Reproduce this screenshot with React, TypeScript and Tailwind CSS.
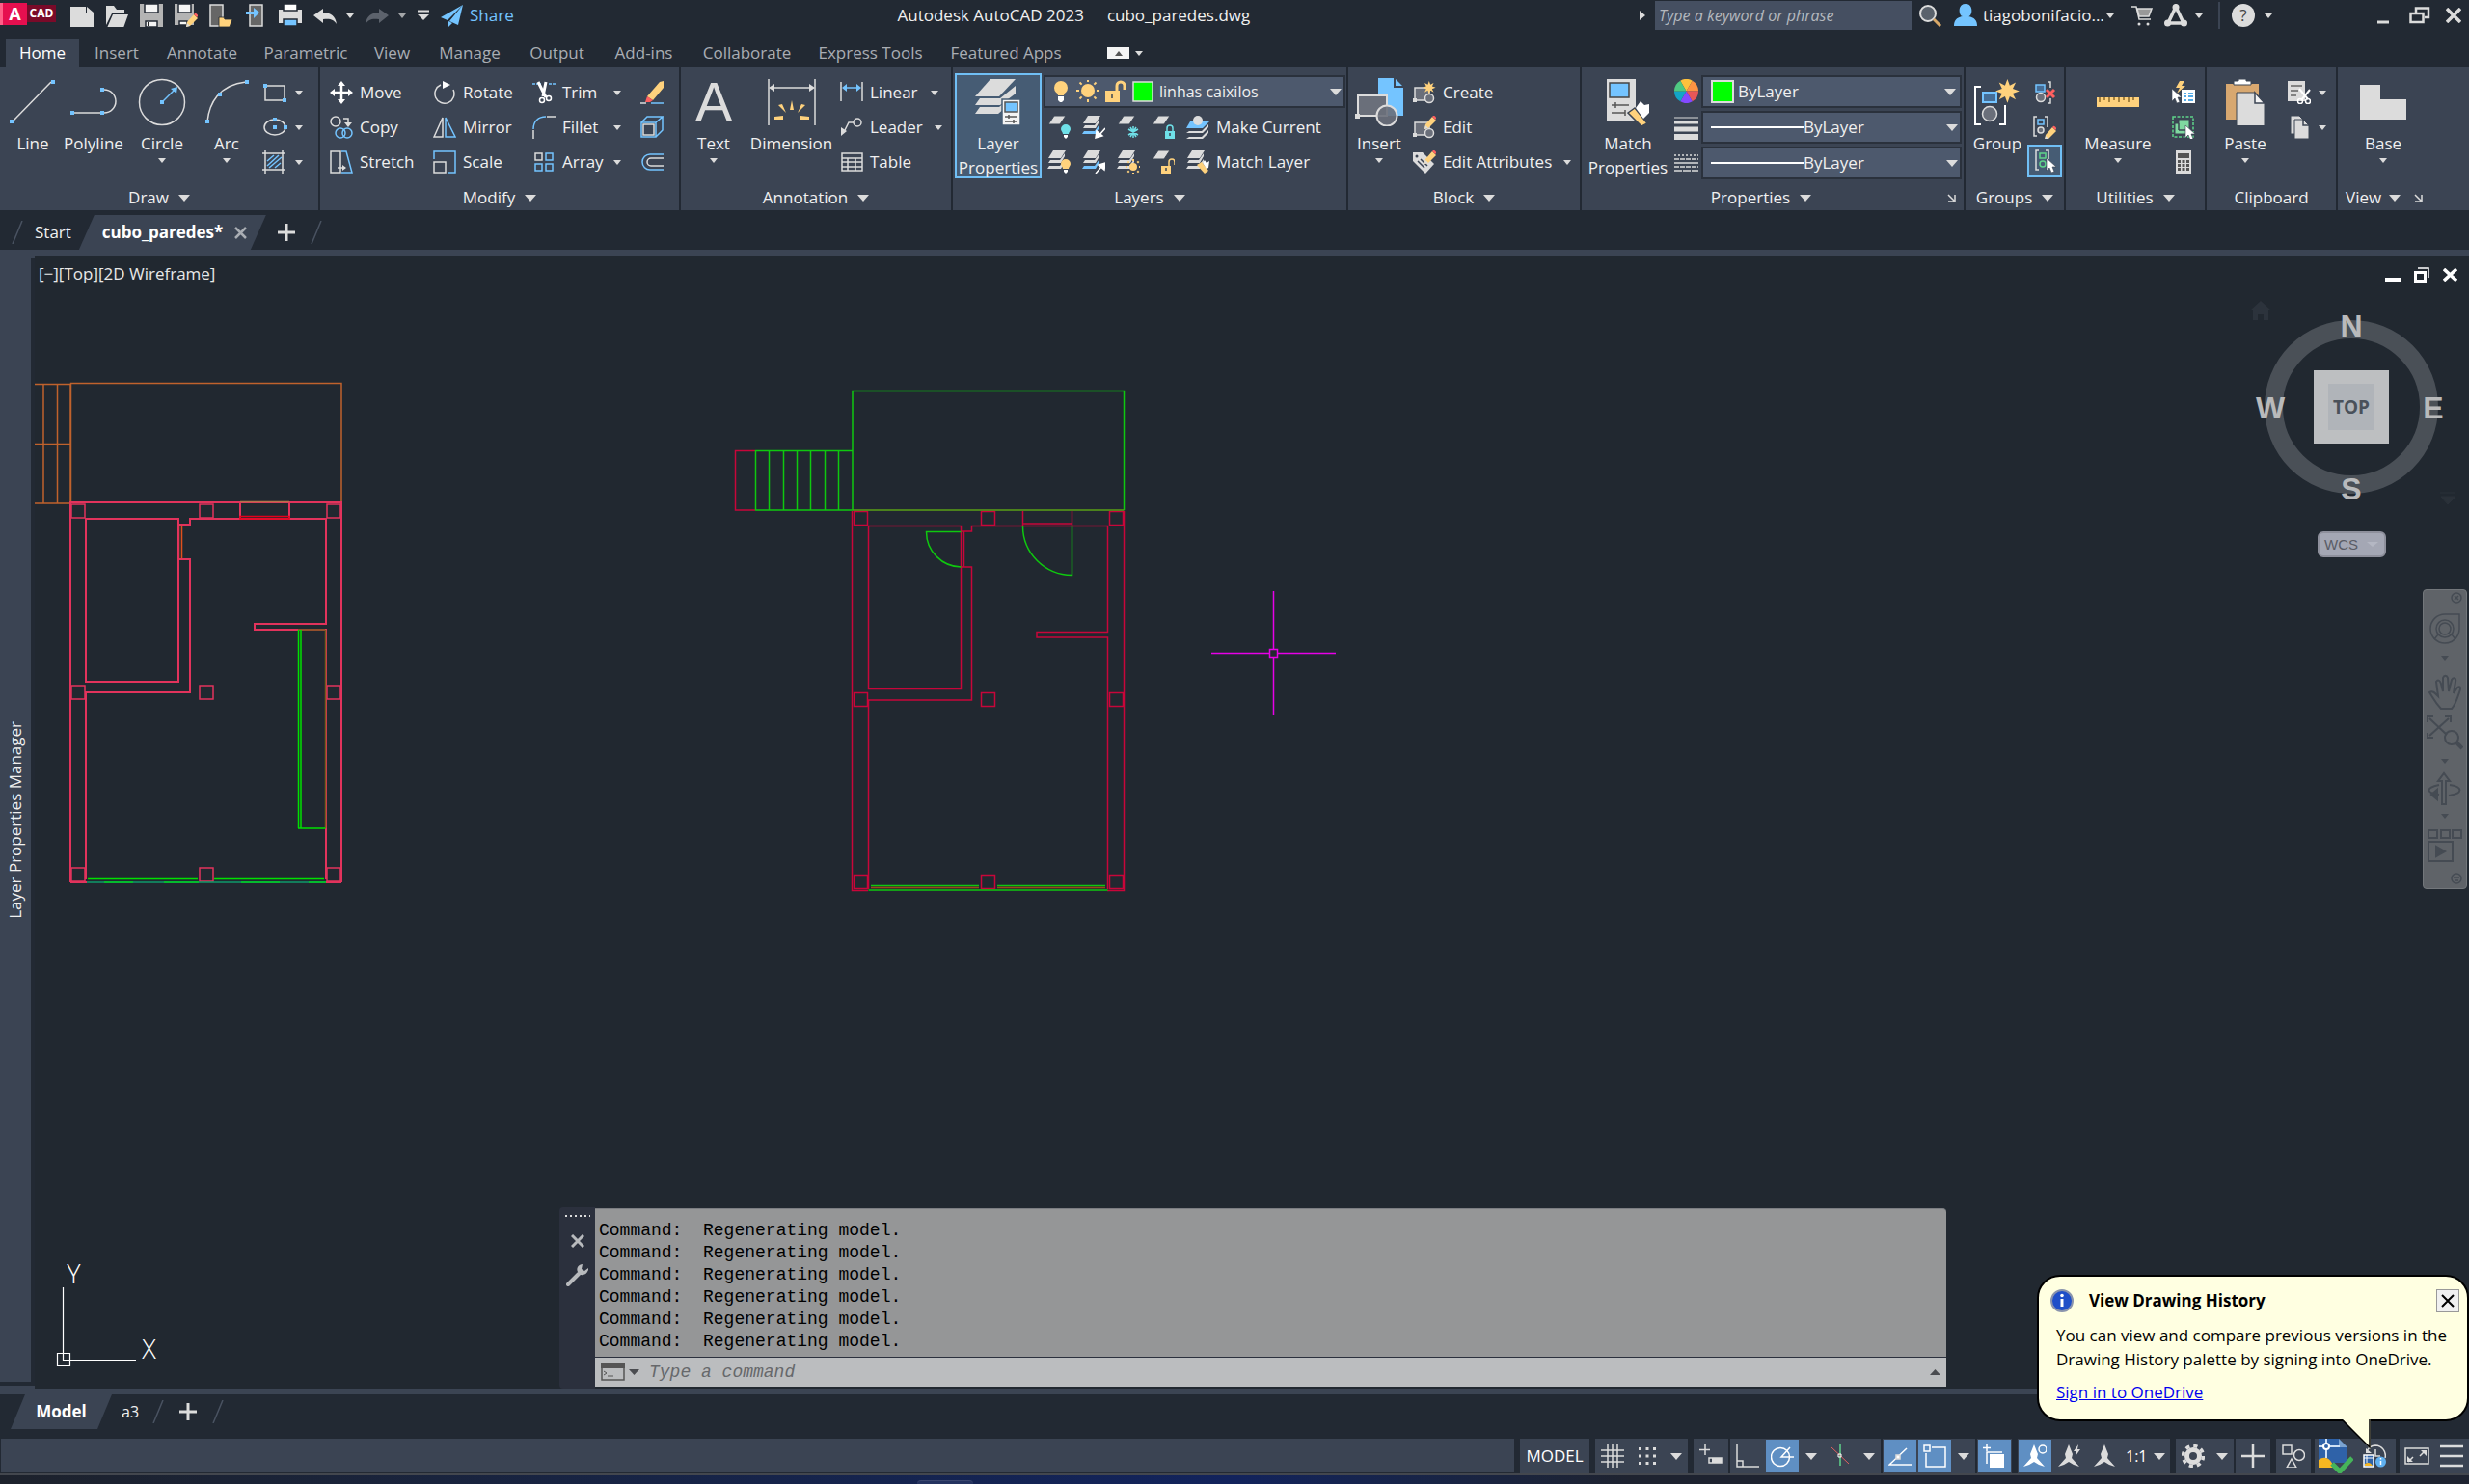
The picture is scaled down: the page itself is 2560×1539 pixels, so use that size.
import React from "react";

const L = "#dcdcdc";
const B = "#74c4ff";
const Y = "#ffd27d";
const G = "#5fd38a";
const D = "#3b4453";

type Kids = { children?: React.ReactNode };

function Svg({ w = 24, h = 24, children }: Kids & { w?: number; h?: number }) {
  return (
    <svg width={w} height={h} viewBox={`0 0 ${w} ${h}`} fill="none" stroke={L} strokeWidth={1.5} className="block shrink-0" aria-hidden="true">
      {children}
    </svg>
  );
}

function Tri({ big = false }: { big?: boolean }) {
  return big ? (
    <svg width="12" height="7" viewBox="0 0 12 7" fill={L} className="block shrink-0" aria-hidden="true"><path d="M0 0h12L6 7z" /></svg>
  ) : (
    <svg width="8" height="5" viewBox="0 0 8 5" fill={L} className="block shrink-0" aria-hidden="true"><path d="M0 0h8L4 5z" /></svg>
  );
}

function Tall({ icon, label, label2, arrow, className = "" }: { icon: React.ReactNode; label: string; label2?: string; arrow?: boolean; className?: string }) {
  return (
    <button type="button" className={`flex h-27 shrink-0 flex-col items-center pt-1 ${className}`}>
      <span className="flex h-12 items-center justify-center">{icon}</span>
      <span className="mt-1.5 whitespace-nowrap leading-[26px]">{label}</span>
      {label2 && <span className="whitespace-nowrap leading-6">{label2}</span>}
      {arrow && <span className="mt-0.5"><Tri /></span>}
    </button>
  );
}

function Small({ icon, label, arrow, className = "" }: { icon: React.ReactNode; label: string; arrow?: boolean; className?: string }) {
  return (
    <button type="button" className={`flex h-9 items-center gap-[7px] ${className}`}>
      {icon}
      <span className="whitespace-nowrap">{label}</span>
      {arrow && <span className="ml-auto"><Tri /></span>}
    </button>
  );
}

function IconBtn({ icon, label, arrow, className = "" }: { icon: React.ReactNode; label: string; arrow?: boolean; className?: string }) {
  return (
    <button type="button" aria-label={label} className={`flex h-9 items-center ${className}`}>
      {icon}
      {arrow && <span className="ml-2"><Tri /></span>}
    </button>
  );
}

function Panel({ title, width, arrow = true, corner, children }: Kids & { title: string; width: string; arrow?: boolean; corner?: boolean }) {
  return (
    <section aria-label={title} className={`flex shrink-0 flex-col border-r-2 border-[#222933] pt-2 ${width}`}>
      <div className="flex h-27">{children}</div>
      <div className="flex h-8 items-center justify-center pt-1.5">
        <span className="flex-1" />
        <button type="button" className="flex items-center gap-2.5">
          {title}
          {arrow && <Tri big />}
        </button>
        {corner ? (
          <span className="ml-4 flex flex-1 justify-end pr-2"><button type="button" aria-label={`${title} settings`}><Svg w={9} h={9}><path d="M1 1l6 6M8 1v7H1" /></Svg></button></span>
        ) : <span className="flex-1" />}
      </div>
    </section>
  );
}

/* ---- small icon fragments ---- */
const sq = (x: number, y: number) => <rect x={x} y={y} width="4" height="4" fill={B} stroke="none" />;
const Sheet = ({ x = 0, y = 0, c = L }: { x?: number; y?: number; c?: string }) => <path d={`M${x + 6} ${y}h12l-6 9h-12z`} fill={c} stroke={D} strokeWidth="1" />;
const Stack = ({ low = L, kids }: { low?: string; kids?: React.ReactNode }) => (
  <Svg>
    <path d="M6 0h13l-5 8H1z" fill={L} stroke="none" />
    <path d="M3 10h10l5-7v3l-4 7H1z" fill={L} stroke="none" />
    <path d="M2 16h11l5-7v3l-4 7H0z" fill={low} stroke="none" />
    {kids}
  </Svg>
);
const Bulb = ({ x = 0, y = 0, c = Y }: { x?: number; y?: number; c?: string }) => (
  <g stroke="none" transform={`translate(${x} ${y})`}>
    <path d="M5 0a5 5 0 0 1 5 5c0 2-2 3-2 5H2C2 8 0 7 0 5a5 5 0 0 1 5-5z" fill={c} />
    <path d="M3 11h4v2l-2 2-2-2z" fill="#fff" />
  </g>
);
const Arrow = ({ x = 0, y = 0 }: { x?: number; y?: number }) => <path transform={`translate(${x} ${y})`} d="M0 0v13l3-3 2 5 3-1-2-5h4z" fill="#fff" stroke={D} strokeWidth=".6" />;
const Pencil = ({ x = 0, y = 0 }: { x?: number; y?: number }) => (
  <g transform={`translate(${x} ${y})`} stroke="none">
    <path d="M8 1l4 4-8 8-4 1 1-5z" fill={Y} /><path d="M8 1l1-1c1-1 4 2 3 3l-1 1z" fill="#ff6060" /><path d="M0 14l1-4 3 3z" fill={L} />
  </g>
);
const Sun = ({ x = 0, y = 0, r = 4, R = 11 }: { x?: number; y?: number; r?: number; R?: number }) => (
  <g transform={`translate(${x} ${y})`} stroke={Y} strokeWidth="2">
    <circle r={r} fill={Y} stroke="none" />
    {[0, 45, 90, 135, 180, 225, 270, 315].map((a) => <path key={a} d={`M0 ${-r - 2}V${-R}`} transform={`rotate(${a})`} />)}
  </g>
);
const Lock = ({ x = 0, y = 0, c = Y, open = true }: { x?: number; y?: number; c?: string; open?: boolean }) => (
  <g transform={`translate(${x} ${y})`}>
    <rect x="0" y="7" width="10" height="8" fill={c} stroke="none" />
    <path d={open ? "M8 7V3a3 3 0 0 1 6 0v3" : "M2 7V4a3 3 0 0 1 6 0v3"} stroke={c} /><path d="M5 9v3" stroke={D} />
  </g>
);
const star = "M8 0l1.6 4.4L13.600 2.300 11.600 6.400 16 8l-4.400 1.600 2 4.100-4-2.100L8 16l-1.600-4.400-4 2.100 2-4.100L0 8l4.400-1.600-2-4.100 4 2.100z";

function BlockBase() {
  return <><path d="M2 7h15v13H2z" fill="#6a6f7a" stroke={L} /><circle cx="17" cy="18" r="4.500" fill="#6a6f7a" /><rect x="0" y="18" width="4" height="4" fill={L} stroke="none" /></>;
}

/* ---- title bar ---- */
function TitleBar() {
  return (
    <header className="flex h-10 items-start bg-[#222933] text-[17px] text-[#f0f0f0]">
      <div className="flex h-8 w-[73px] shrink-0 items-center">
        <button type="button" aria-label="Application menu" className="flex items-center text-white">
          <span className="mb-1 flex h-[23px] w-7 items-center justify-center border-l-3 border-[#ff5f88] bg-[#e60f4f] text-[18px] font-bold leading-none">A</span>
          <span className="mb-1 flex h-[18px] w-[30px] items-center justify-center bg-[#7a0a29] text-[12px] font-bold leading-none">CAD</span>
        </button>
      </div>
      <nav aria-label="Quick access" className="flex h-8 items-center">
        <div className="flex gap-3">
          <button type="button" aria-label="New"><Svg><path d="M0 3h16v7h8v15H0z M17 3l7 6h-7z" fill={L} stroke="none" /></Svg></button>
          <button type="button" aria-label="Open"><Svg><path d="M1 2h8l3 4h8v4H7L1 22z M8 11h16l-5 14H2z" fill={L} stroke="none" /></Svg></button>
          <button type="button" aria-label="Save"><Svg><path d="M0 0h24v24H0z" fill="#b4b4b4" stroke="none" /><path d="M5 0h14v9H5z M6 18h12v6H6z" fill="#f4f4f4" stroke="#222933" strokeWidth="1.500" /><path d="M9 19v4" stroke="#222" strokeWidth="2" /></Svg></button>
          <button type="button" aria-label="Save as"><Svg><path d="M0 0h20v22H0z" fill="#b4b4b4" stroke="none" /><path d="M4 0h13v9H4z M5 18h8v4H5z" fill="#f4f4f4" stroke="#222933" /><Pencil x={12} y={10} /></Svg></button>
          <button type="button" aria-label="Open from mobile"><Svg><path d="M1 1h13v22H1z" fill="#666" stroke={L} /><path d="M10 14h5l1 2h8l-3 8H10z" fill={Y} stroke="#222933" strokeWidth=".8" /></Svg></button>
          <button type="button" aria-label="Save to mobile"><Svg><path d="M6 1h13v22H6z" fill="#666" stroke={L} /><path d="M2 8h8V4l6 5-6 6v-4H2z" fill={B} stroke="none" /></Svg></button>
          <button type="button" aria-label="Plot"><Svg><path d="M0 6h24v14H0z" fill={L} stroke="none" /><path d="M5 0h14v7H5z" fill="#fff" stroke="#222933" /><path d="M5 16h14v7H5z" fill={B} stroke="#222933" /></Svg></button>
          <button type="button" aria-label="Undo"><Svg><path d="M0 12l10-7v4c8 0 13 4 14 12-3-5-7-6-14-5v4z" fill={L} stroke="none" /></Svg></button>
        </div>
        <button type="button" aria-label="Undo list" className="ml-2.5"><Tri /></button>
        <button type="button" aria-label="Redo" className="ml-3"><Svg><path d="M24 12L14 5v4C6 9 1 13 0 21c3-5 7-6 14-5v4z" fill="#5c626c" stroke="none" /></Svg></button>
        <button type="button" aria-label="Redo list" className="ml-2.5 opacity-70"><Tri /></button>
        <button type="button" aria-label="Customize" className="ml-3"><Svg w={12} h={12}><path d="M0 1.500h12" strokeWidth="2" /><path d="M0 5h12l-6 6z" fill={L} stroke="none" /></Svg></button>
        <button type="button" className="ml-3 flex items-center gap-1.5 text-[#74c4ff]">
          <Svg><path d="M23 1L0 14l7 3z M23 1L9 18l9 4z M8 18v6l4-4z" fill={B} stroke="none" /></Svg>Share
        </button>
      </nav>
      <h1 className="flex h-8 flex-1 items-center justify-center gap-6 pr-1.5 font-normal">
        <span>Autodesk AutoCAD 2023</span><span>cubo_paredes.dwg</span>
      </h1>
      <div className="flex h-8 items-center">
        <button type="button" aria-label="Collapse search"><Svg w={6} h={10}><path d="M0 0l6 5-6 5z" fill={L} stroke="none" /></Svg></button>
        <input type="text" aria-label="Search" placeholder="Type a keyword or phrase" className="ml-2.5 h-[30px] w-[266px] bg-[#454f61] px-1 text-[16px] italic placeholder:text-[#b4b8be]" />
        <button type="button" aria-label="Run search" className="ml-2"><Svg><circle cx="9" cy="10" r="8" fill="#5a626c" strokeWidth="2" /><path d="M15 16l7 7" stroke="#d8a868" strokeWidth="3" /></Svg></button>
        <button type="button" className="ml-3 flex w-[166px] items-center">
          <Svg><path d="M12 0c9 0 7 13 3 13 6 1 9 4 9 10H0c0-6 3-9 9-10C5 13 3 0 12 0z" fill={B} stroke="none" /></Svg>
          <span className="ml-1.5 whitespace-nowrap text-[17px]">tiagobonifacio...</span><span className="ml-auto"><Tri /></span>
        </button>
        <button type="button" aria-label="Store" className="ml-4.5"><Svg><path d="M0 3h5l3 13h12" /><path d="M6 5h15l-3 8H8z" fill="#999" /><circle cx="8" cy="21" r="1.500" fill={L} stroke="none" /><circle cx="17" cy="21" r="1.500" fill={L} stroke="none" /></Svg></button>
        <button type="button" aria-label="Autodesk apps" className="ml-2.5 flex items-center gap-2"><Svg><path d="M12 3L4 20h16z" strokeWidth="3.500" /><circle cx="12" cy="3.500" r="3.500" fill={L} stroke="none" /><circle cx="3.500" cy="20" r="3.500" fill={L} stroke="none" /><circle cx="20.500" cy="20" r="3.500" fill={L} stroke="none" /></Svg><Tri /></button>
        <span className="ml-4 h-7 w-0.5 bg-[#3b4453]" />
        <button type="button" aria-label="Help" className="ml-3 flex items-center gap-2.5"><span className="flex size-6 items-center justify-center rounded-full bg-[#dcdcdc] text-[17px] text-[#444]">?</span><Tri /></button>
        <button type="button" aria-label="Minimize" className="ml-27"><Svg w={14} h={20}><path d="M1 17h12" strokeWidth="3" /></Svg></button>
        <button type="button" aria-label="Restore" className="ml-5"><Svg w={22} h={18}><path d="M7 6V1.500h13V11h-4" strokeWidth="2.500" /><path d="M1.500 7h13v9h-13z" strokeWidth="2.500" /></Svg></button>
        <button type="button" aria-label="Close" className="mr-2 ml-4"><Svg w={16} h={16}><path d="M1 1l14 14M15 1L1 15" strokeWidth="3.500" /></Svg></button>
      </div>
    </header>
  );
}

const ribbonTabs: [string, string][] = [
  ["Home", "w-[76px]"], ["Insert", "w-[74px]"], ["Annotate", "w-[103px]"], ["Parametric", "w-[112px]"], ["View", "w-[67px]"], ["Manage", "w-[94px]"],
  ["Output", "w-[87px]"], ["Add-ins", "w-[93px]"], ["Collaborate", "w-[121px]"], ["Express Tools", "w-[135px]"], ["Featured Apps", "w-[146px]"],
];

function RibbonTabs() {
  return (
    <div role="tablist" className="flex h-[30px] items-center bg-[#222933] pl-1.5 text-[17px] text-[#a9adb3]">
      {ribbonTabs.map(([t, w], i) => (
        <button key={t} type="button" role="tab" aria-selected={i === 0} className={`h-full whitespace-nowrap text-center ${w} ${i === 0 ? "mr-0.5 bg-[#3b4453] text-white" : ""}`}>{t}</button>
      ))}
      <button type="button" aria-label="Minimize ribbon" className="ml-8 flex items-center gap-1.5"><span className="flex h-3 w-[23px] items-center justify-center bg-[#f4f4f4]"><svg width="8" height="5" viewBox="0 0 8 5" fill="#555" aria-hidden="true"><path d="M0 5h8L4 0z" /></svg></span><Tri /></button>
    </div>
  );
}

function LineTypeCombo({ label }: { label: string }) {
  return (
    <div className="flex h-[34px] w-[270px] items-center border-2 border-[#2a313c] bg-[#4d596d] pr-0.5 pl-2">
      <span className="h-0.5 w-24 bg-white" />
      <select aria-label={label} className="min-w-0 flex-1 appearance-none bg-transparent"><option>ByLayer</option></select>
      <Tri big />
    </div>
  );
}

function Ribbon() {
  return (
    <div className="flex h-[148px] bg-[#3b4453] text-[17px] text-[#f0f0f0]">
      <Panel title="Draw" width="w-[332px]">
        <Tall className="ml-1.5 w-14" label="Line" icon={<Svg w={50} h={48}><path d="M4 44L44 3" />{sq(1, 42)}{sq(44, 1)}</Svg>} />
        <Tall className="w-[70px]" label="Polyline" icon={<Svg w={50} h={48}><path d="M3 35h33a12 12 0 0 0 0-24h-2" />{sq(1, 33)}{sq(32, 33)}{sq(32, 9)}</Svg>} />
        <Tall className="w-[72px]" label="Circle" arrow icon={<Svg w={50} h={50}><circle cx="25" cy="25" r="23.500" /><path d="M26 24l13-13" stroke={B} /><path d="M41 9l-1 7-6-5z" fill={B} stroke="none" />{sq(23, 23)}</Svg>} />
        <Tall className="w-[62px]" label="Arc" arrow icon={<Svg w={48} h={50}><path d="M4 45C6 26 16 7 44 4" />{sq(2, 43)}{sq(15, 15)}{sq(43, 2)}</Svg>} />
        <div className="ml-1.5 flex flex-col">
          <IconBtn arrow label="Rectangle" icon={<Svg w={26}><path d="M3 5h20v15H3z" />{sq(1, 3)}{sq(21, 18)}</Svg>} />
          <IconBtn arrow label="Ellipse" icon={<Svg w={26}><ellipse cx="13" cy="12" rx="11" ry="8" />{sq(11, 2)}{sq(11, 10)}{sq(22, 10)}</Svg>} />
          <IconBtn arrow label="Hatch" icon={<Svg w={26}><path d="M0 3h24M0 20h24M3 0v24M21 0v24" /><path d="M5 11l7-6M5 16L17 5M7 18L20 7M13 18l6-5" stroke={B} /></Svg>} />
        </div>
      </Panel>

      <Panel title="Modify" width="w-[374px]">
        <div className="ml-2.5 grid grid-cols-[107px_103px_112px_26px] content-start justify-items-stretch">
          <Small label="Move" icon={<Svg><path d="M12 3v18M3 12h18" strokeWidth="2.500" stroke="#fff" /><path d="M12 0l4 5H8zM12 24l4-5H8zM0 12l5-4v8zM24 12l-5-4v8z" fill="#fff" stroke="none" /></Svg>} />
          <Small label="Rotate" icon={<Svg><path d="M8 4A10 10 0 1 0 21 9" /><path d="M10 0l8 4-8 4z" fill="#fff" stroke="none" /></Svg>} />
          <Small arrow className="pr-5" label="Trim" icon={<Svg><path d="M0 3h9M17 3h7" strokeDasharray="3 1" stroke={B} /><path d="M6 1l8 16M14 1l-3 15" strokeWidth="3" stroke="#fff" /><circle cx="10" cy="20" r="2.500" stroke="#fff" /><circle cx="17" cy="18" r="2.500" stroke="#fff" /></Svg>} />
          <IconBtn label="Erase" icon={<Svg><path d="M20 1l4-1v7L13 20l-6-4z" fill={Y} stroke="none" /><path d="M7 16l6 4-3 2H5z" fill="#ff6060" stroke="none" /><path d="M0 23h6" /><path d="M11 23h13" stroke={B} /></Svg>} />
          <Small label="Copy" icon={<Svg><circle cx="6" cy="6" r="5" /><circle cx="11" cy="18" r="5" stroke={B} /><circle cx="18" cy="18" r="5" stroke={B} /><path d="M14 3h5v5" /><path d="M15 7h8l-4 5z" fill={L} stroke="none" /></Svg>} />
          <Small label="Mirror" icon={<Svg><path d="M10 2v20H1z" /><path d="M13 2v20h10z" stroke={B} /></Svg>} />
          <Small arrow className="pr-5" label="Fillet" icon={<Svg><path d="M1 24v-9M15 1h9" /><path d="M1 14C1 6 6 1 14 1" stroke={B} /></Svg>} />
          <IconBtn label="Explode" icon={<Svg><path d="M3 9h11v11H3z" /><path d="M1 7h15v15H1zM1 7l6-6h16l-7 6M23 1v14l-7 7" stroke={B} /></Svg>} />
          <Small label="Stretch" icon={<Svg><path d="M1 1h10v22H1zM8 18h8" /><path d="M12 1h5l6 22H12" stroke={B} /><path d="M13 15l4 3-4 3z" fill={L} stroke="none" /></Svg>} />
          <Small label="Scale" icon={<Svg><path d="M1 12h12v11H1z" /><path d="M1 9V1h22v22h-7" stroke={B} /></Svg>} />
          <Small arrow className="pr-5" label="Array" icon={<Svg><path d="M3 3h7v7H3z" /><path d="M14 3h7v7h-7zM3 14h7v7H3zM14 14h7v7h-7z" stroke={B} /></Svg>} />
          <IconBtn label="Offset" icon={<Svg><path d="M24 4H10a8 8 0 0 0 0 16h14" stroke={B} /><path d="M24 8H11a4 4 0 0 0 0 8h13" /></Svg>} />
        </div>
      </Panel>

      <Panel title="Annotation" width="w-[282px]">
        <Tall className="w-[68px]" arrow label="Text" icon={<span className="font-['Liberation_Sans',Arial,sans-serif] text-[58px] leading-none text-[#dcdcdc]">A</span>} />
        <Tall className="w-[93px]" label="Dimension" icon={<Svg w={50} h={50}><path d="M1 1v48M49 1v48M4 10h42" /><path d="M1 10l6-4v8zM49 10l-6-4v8z" fill={L} stroke="none" /><g fill={Y} stroke="none"><path d="M23 33l2-10 2 10zM19 36l-8-8 4-1zM31 36l8-8-4-1zM16 39v4l-9 0v-3zM34 39v4h9v-3z" /></g></Svg>} />
        <div className="ml-1 flex w-[106px] flex-col">
          <Small arrow className="pr-1" label="Linear" icon={<Svg><path d="M1 1v20M23 1v20" /><path d="M4 7h16" stroke={B} /><path d="M2 7l5-4v8zM22 7l-5-4v8z" fill={B} stroke="none" /></Svg>} />
          <Small arrow label="Leader" icon={<Svg><circle cx="18" cy="7" r="4" /><path d="M14 7H9L4 17" /><path d="M1 21V12l6 4z" fill={L} stroke="none" /></Svg>} />
          <Small label="Table" icon={<Svg><path d="M2 3h21v18H2zM2 8h21M2 12h21M2 17h21M8 8v13M16 8v13" /></Svg>} />
        </div>
      </Panel>

      <Panel title="Layers" width="w-[410px]">
        <button type="button" className="-mt-0.5 ml-0.5 flex h-[109px] w-[90px] shrink-0 flex-col items-center border-2 border-[#70bff5] bg-[#465c74] pt-1">
          <Svg w={50} h={48}><path d="M17 0h26L26 18H1z" fill={L} stroke="none" /><path d="M6 20h21L43 7v8L27 27H1zM6 29h20l6-5v6l-7 6H1z" fill={L} stroke="none" /><path d="M29 21h19v27H29z" fill="#f4f4f4" stroke="#465c74" /><path d="M32 24h13v10H32z" fill={B} stroke="#555" /><path d="M32 39h13M32 44h13M36 37v4M41 42v4" stroke="#555" /></Svg>
          <span className="mt-1.5 leading-[26px]">Layer</span><span className="leading-6">Properties</span>
        </button>
        <div className="ml-0.5 flex flex-col">
          <div className="flex h-[34px] w-[313px] items-center border-2 border-[#2a313c] bg-[#4d596d] pr-0.5 pl-2">
            <Svg w={104}><circle cx="8" cy="8" r="7" fill={Y} stroke="none" /><path d="M4 12h8l-1 4H5z" fill={Y} stroke="none" /><path d="M5 17h6v4l-2 2H7l-2-2z" fill="#fff" stroke="none" /><Sun x={36} y={11} r={7} R={12} /><rect x="54" y="11" width="15" height="12" fill={Y} stroke="none" /><path d="M66 11V6a4 4 0 0 1 8 0v4" stroke={Y} strokeWidth="3" /><path d="M61 14v5" stroke={D} /><rect x="83" y="2" width="20" height="20" fill="#00ff00" /></Svg>
            <select aria-label="Current layer" className="ml-1.5 min-w-0 flex-1 appearance-none bg-transparent text-[16px]"><option>linhas caixilos</option></select>
            <Tri big />
          </div>
          <div className="mt-0.5 ml-1 grid grid-cols-[36px_36px_36px_36px_auto]">
            <IconBtn label="Layer off" icon={<Svg><Sheet x={1} /><Bulb x={14} y={9} c="#6fe0e8" /></Svg>} />
            <IconBtn label="Isolate" icon={<Stack low={B} kids={<path d="M24 13l-7 8M14 23l1-7 6 5z" fill="#fff" stroke="#fff" />} />} />
            <IconBtn label="Freeze" icon={<Svg><Sheet x={1} /><path d="M17 11v12M12 14l10 6M22 14l-10 6M14 12l6 10M20 12l-6 10" stroke="#6fe0e8" /></Svg>} />
            <IconBtn label="Lock" icon={<Svg><Sheet x={1} /><Lock x={14} y={9} c="#6fe0e8" open={false} /></Svg>} />
            <Small label="Make Current" icon={<Svg><path d="M4 6h20l-7 7H0z" fill={B} stroke="none" /><circle cx="12" cy="5" r="5" fill={L} stroke="none" /><path d="M3 16h13l7-7v3l-6 6H0zM3 22h13l7-7v3l-6 6H0z" fill={L} stroke="none" /></Svg>} />
            <IconBtn label="All on" icon={<Stack kids={<Bulb x={14} y={9} />} />} />
            <IconBtn label="Unisolate" icon={<Stack low={B} kids={<path d="M14 24l6-7M24 13l-1 7-6-5z" fill="#fff" stroke="#fff" />} />} />
            <IconBtn label="Thaw" icon={<Stack kids={<Sun x={17} y={17} r={4} R={8} />} />} />
            <IconBtn label="Unlock" icon={<Svg><Sheet x={1} /><Lock x={10} y={9} /></Svg>} />
            <Small label="Match Layer" icon={<Stack kids={<><path d="M11 15l5-3 7 9-4 3z" fill={Y} stroke="none" /><path d="M17 13l2-3 2 3 3-2-1 7-2 1z" fill="#fff" stroke="none" /></>} />} />
          </div>
        </div>
      </Panel>

      <Panel title="Block" width="w-[242px]">
        <Tall className="ml-px w-[62px]" arrow label="Insert" icon={<Svg w={50} h={50}><path d="M24 0h17l9 9v30H24z" fill={B} stroke="none" /><path d="M41 0v9h9" stroke={D} strokeWidth="2" /><path d="M3 18h30v21H3z" fill="#6a6f7a" stroke={L} strokeWidth="2" /><circle cx="33" cy="39" r="10.500" fill="#6a6f7a" fillOpacity=".9" strokeWidth="2" /><rect x="0" y="37" width="5" height="5" fill={L} stroke="none" /></Svg>} />
        <div className="ml-1 flex w-[164px] flex-col">
          <Small label="Create" icon={<Svg><BlockBase /><path d={star} transform="translate(10 0) scale(.85)" fill={Y} stroke="none" /></Svg>} />
          <Small label="Edit" icon={<Svg><BlockBase /><Pencil x={12} y={0} /></Svg>} />
          <Small arrow label="Edit Attributes" icon={<Svg><path d="M0 2l10 0 12 12-9 10L0 11z" fill={L} stroke="none" /><circle cx="4" cy="6" r="1.500" fill={D} stroke="none" /><path d="M5 11l7 7M8 9l7 7" stroke={D} /><Pencil x={12} y={0} /></Svg>} />
        </div>
      </Panel>

      <Panel title="Properties" width="w-[398px]" corner>
        <Tall className="w-24" label="Match" label2="Properties" icon={<Svg w={48} h={48}><path d="M2 0h30v43H2z" fill={L} stroke="none" /><path d="M5 4h20v15H5z" fill={B} stroke="#444" /><path d="M7 27h18M7 35h14M11 24v6M21 32v6" stroke="#555" /><path d="M24 35l7-5 13 16-6 3z" fill={Y} stroke={D} /><path d="M32 30l5-7 4 4 5-1v9l-6 6z" fill="#fff" stroke="none" /></Svg>} />
        <div className="flex w-[26px] flex-col justify-between py-1">
          <svg width="25" height="25" viewBox="-12 -12 24 24" aria-hidden="true">
            {["#ffc13d", "#ff9442", "#e85757", "#8449ff", "#12a5c8", "#4fc982"].map((c, i) => <path key={c} fill={c} d="M0 0L-6-10.400A12 12 0 0 1 6-10.400z" transform={`rotate(${i * 60})`} />)}
          </svg>
          <Svg w={25}><path d="M0 1h25" strokeWidth="1" /><path d="M0 6h25" strokeWidth="3" /><path d="M0 13h25" strokeWidth="5" /><path d="M0 21h25" strokeWidth="6" /></Svg>
          <Svg w={25}><path d="M0 3h25" strokeDasharray="2 2" /><path d="M0 7h25M0 15h25" strokeDasharray="5 1" /><path d="M0 11h25" /><path d="M0 19h25" strokeDasharray="8 1" /></Svg>
        </div>
        <div className="ml-0.5 flex flex-col gap-[3px]">
          <div className="flex h-[34px] w-[270px] items-center border-2 border-[#2a313c] bg-[#4d596d] pr-1 pl-2">
            <span className="size-6 border-2 border-[#dcdcdc] bg-[#00ff00]" />
            <select aria-label="Object color" className="ml-1 min-w-0 flex-1 appearance-none bg-transparent"><option>ByLayer</option></select>
            <Tri big />
          </div>
          <LineTypeCombo label="Lineweight" />
          <LineTypeCombo label="Linetype" />
        </div>
      </Panel>

      <Panel title="Groups" width="w-26">
        <Tall className="ml-0.5 w-[62px]" label="Group" icon={<Svg w={48} h={48}><path d="M7 8H1v39h6M26 47h6V27" strokeWidth="2" stroke="#fff" /><path d="M9 14h14v10H9z" fill="#466d95" stroke={B} strokeWidth="2" /><circle cx="16" cy="36" r="7.500" fill="#6a6f7a" /><path d={star} transform="translate(22 0) scale(1.550)" fill={Y} stroke="none" /></Svg>} />
        <div className="flex w-9 flex-col items-center">
          <IconBtn label="Ungroup" icon={<Svg><path d="M3 4h9v7H3z" fill="#466d95" stroke={B} /><circle cx="8" cy="17" r="4.500" fill="#6a6f7a" /><path d="M15 1h3v6M18 18v5h-3" /><path d="M14 9l8 8M22 9l-8 8" stroke="#ff6060" strokeWidth="3" /></Svg>} />
          <IconBtn label="Group edit" icon={<Svg><path d="M4 1H1v20h3M12 1h3v11" /><path d="M5 4h6v5H5z" stroke={B} /><circle cx="8" cy="15" r="3" fill="#6a6f7a" /><Pencil x={12} y={11} /></Svg>} />
          <button type="button" aria-label="Group selection" aria-pressed="true" className="flex h-[34px] w-9 items-center justify-center border-2 border-[#70bff5] bg-[#465c74]"><Svg><path d="M6 1H3v20h3M13 1h3v9" /><path d="M7 4h6v5H7z" stroke={G} /><circle cx="10" cy="15" r="3" stroke={G} /><Arrow x={14} y={9} /></Svg></button>
        </div>
      </Panel>

      <Panel title="Utilities" width="w-[146px]">
        <Tall className="w-[108px]" arrow label="Measure" icon={<Svg w={44} h={12}><path d="M0 1h44v10H0z" fill={Y} stroke="none" /><path d="M3 1v5M8 1v3M13 1v5M18 1v3M23 1v5M28 1v3M33 1v5M38 1v3" stroke="#8a6a2a" /></Svg>} />
        <div className="ml-0.5 flex flex-col">
          <IconBtn label="Quick select" icon={<Svg><path d="M8 0l-4 7h4l-3 6 9-8H10l3-5z" fill={Y} stroke="none" /><path d="M10 9h14v14H10z" fill="#fff" stroke="none" /><path d="M13 13h2M17 13h5M13 16h2M17 16h5M13 20h2M17 20h5" stroke="#1e90e0" /><Arrow x={0} y={8} /></Svg>} />
          <IconBtn label="Select all" icon={<Svg><path d="M1 1h21v21H1z" stroke={G} strokeDasharray="3 1.500" /><path d="M3 8h4v7h9v4H3z M7 4h11v11H7z" fill="#7fd8a0" stroke={D} strokeWidth="1" /><Arrow x={14} y={10} /></Svg>} />
          <IconBtn label="Calculator" icon={<Svg><path d="M4 0h16v24H4z" fill={L} stroke="none" /><path d="M6 3h12v5H6zM6 10h3v3H6zM10.500 10h3v3h-3zM15 10h3v3h-3zM6 14h3v3H6zM10.500 14h3v3h-3zM15 14h3v3h-3zM6 18h3v3H6zM10.500 18h3v3h-3zM15 18h3v3h-3z" fill="#555" stroke="none" /></Svg>} />
        </div>
      </Panel>

      <Panel title="Clipboard" width="w-[136px]" arrow={false}>
        <Tall className="w-20" arrow label="Paste" icon={<Svg w={40} h={48}><path d="M0 5h34v37H0z" fill="#d8a870" stroke="none" /><path d="M8 6V2h5V0h8v2h5v4z" fill="#fff" stroke={D} strokeWidth="1" /><path d="M11 14h19l10 11v24H11z" fill={L} stroke={D} strokeWidth="1" /><path d="M30 14l10 11H30z" fill="#f4f4f4" stroke={D} /></Svg>} />
        <div className="ml-1 flex flex-col">
          <IconBtn arrow label="Cut" icon={<Svg><path d="M0 0h18v21H0z" fill={L} stroke="none" /><path d="M3 5h12M3 10h8M3 15h6" stroke="#666" /><path d="M12 8l9 11M23 9l-9 11" stroke="#fff" strokeWidth="2" /><circle cx="13" cy="21" r="2.500" stroke="#fff" /><circle cx="21" cy="21" r="2.500" stroke="#fff" /></Svg>} />
          <IconBtn arrow label="Copy clip" icon={<Svg><path d="M3 0h9l6 6v13H3z" fill={L} stroke={D} strokeWidth="1" /><path d="M7 4h9l6 6v14H7z" fill={L} stroke={D} strokeWidth="1" /><path d="M16 4v6h6" stroke={D} /></Svg>} />
        </div>
      </Panel>

      <section aria-label="View" className="flex w-[94px] flex-col pt-2">
        <div className="flex h-27 justify-center">
          <Tall className="w-[94px]" arrow label="Base" icon={<Svg w={48} h={36}><path d="M0 0h21v15h27v21H0z" fill={L} stroke="none" /></Svg>} />
        </div>
        <div className="flex h-8 items-center gap-2 pt-1.5 pl-2">
          <button type="button" className="flex items-center gap-2">View<Tri big /></button>
          <button type="button" aria-label="View settings" className="ml-1.5"><Svg w={9} h={9}><path d="M1 1l6 6M8 1v7H1" /></Svg></button>
        </div>
      </section>
    </div>
  );
}

const Slash = () => <Svg w={12} h={24}><path d="M11 0L1 24" stroke="#4a5362" strokeWidth="1.500" /></Svg>;
const Plus = () => <Svg w={18} h={18}><path d="M9 0v18M0 9h18" strokeWidth="3" /></Svg>;

function FileTabs() {
  return (
    <div className="flex h-[47px] items-end border-b-6 border-[#3b4453] bg-[#222933] text-[17px] text-[#f0f0f0]">
      <div className="flex h-9 items-center">
        <span className="ml-3"><Slash /></span>
        <button type="button" className="ml-2 h-full px-1">Start</button>
        <div className="ml-1 flex h-full w-[194px] items-center bg-[#3b4453] pl-6 [clip-path:polygon(16px_0,100%_0,178px_100%,0_100%)]">
          <button type="button" className="font-bold text-white">cubo_paredes*</button>
          <button type="button" aria-label="Close drawing" className="ml-3"><Svg w={13} h={13}><path d="M1 1l11 11M12 1L1 12" strokeWidth="2.500" stroke="#a9adb3" /></Svg></button>
        </div>
        <button type="button" aria-label="New tab" className="ml-3"><Plus /></button>
        <span className="ml-4"><Slash /></span>
      </div>
    </div>
  );
}

/* ---- model space drawing ---- */
const col = (xs: number[], ys: number[]) => xs.flatMap((x) => ys.map((y) => `M${x} ${y}h14v14h-14z`)).join("");

function Drawing() {
  return (
    <svg width="1400" height="720" viewBox="36 265 1400 720" fill="none" strokeWidth="1.500" className="absolute top-0 left-0" role="img" aria-label="Floor plans">
      <g stroke="#c0622c">
        <path d="M73.500 520V397.500H354V520M36 398.500h37M36 460.500h37M36 522h37M45 398v124M59.500 398v124M73 398v122" />
        <path d="M185.500 543v37M188.500 543v37" stroke="#e0501c" />
      </g>
      <g stroke="#e2335c" strokeWidth="2">
        <path d="M73 915V521H354V915M89 538H185V707H89zM185 538v6H197v-6h141V647H264v6h74V912M185 580H197v138H89v194M249 520v18M300 520v18" />
        <path d={col([74, 207, 339], [523, 711, 900])} strokeWidth="1.500" />
        <path d="M73 915h17M338 915h16" />
        <path d="M249 535.500h51v2.500h-51z" stroke="#e3001b" strokeWidth="1.500" />
      </g>
      <path d="M249 520.500h51" stroke="#b5734a" />
      <path d="M337.500 653v206M309 653h28" stroke="#7a5a1c" />
      <path d="M309.500 653v206M312 653v206M309 859h28.500M91 911.500h114M222 911.500h114" stroke="#00e000" />
      <path d="M90 915h248" stroke="#0e9a6a" /><path d="M108 915h30M170 915h36M250 915h40M320 915h18" stroke="#00d020" />

      <g stroke="#c8063a">
        <path d="M783 467.500H762.500V529H783M883.500 530V923.500H900M1148 923.500h17.500V530M900.500 545.500h96V714.500h-96zM996.500 551H1007.500V545.500H1148.500V655.500H1075V661h73.500V922M999.500 551v37M996.500 588h11V726H900.500V922M1060.500 530v15M1111.500 530v15M1060.500 543h51" />
        <path d={col([885.5, 1017.5, 1150.5], [530.5, 718.5, 907.5])} />
      </g>
      <g stroke="#0fc80f">
        <path d="M884 529V405.500H1165.500V529M783 467.500H884M783 529h101M783.500 467v62M797.500 467v62M812.500 467v62M826.500 467v62M840.500 467v62M855.500 467v62M869.500 467v62" />
        <path d="M996.500 551.500H960.500a36.500 36.500 0 0 0 36 36.500M1060.500 545.500a51 51 0 0 0 51 51V545.500" />
        <path d="M884 529h281.500" stroke="#5aa016" />
        <path d="M903 918.500h112M1034 918.500h112M900.500 923h248" /><path d="M903 920.500h112M1034 920.500h112" stroke="#9a4a16" />
      </g>
      <path d="M1256 677.500h60M1325 677.500h60M1320.500 613v60M1320.500 682v60M1316.500 673.500h8v8h-8z" stroke="#e800e8" />
    </svg>
  );
}

function ViewCube() {
  return (
    <div className="absolute top-11 right-2 w-[226px] font-['Liberation_Sans',Arial,sans-serif]">
      <svg width="226" height="270" viewBox="2326 309 226 270" fill="none" role="group" aria-label="View cube" className="block">
        <path d="M2333 322l11-10 11 10h-3v10h-5v-6h-6v6h-5v-10z" fill="#2c333c" />
        <path d="M2530 511h16M2531 515h15l-8 8z" fill="#2a3139" stroke="#2a3139" />
        <circle cx="2438" cy="422" r="80.500" stroke="#4a5057" strokeWidth="19" />
        <rect x="2399" y="384" width="78" height="76" fill="#bdbfc1" /><rect x="2414" y="398" width="48" height="48" fill="#b0b4b9" />
        <g fill="#b9babb" fontSize="32" fontWeight="700" textAnchor="middle">
          <text x="2438" y="349">N</text><text x="2438" y="518">S</text><text x="2354" y="434">W</text><text x="2523" y="434">E</text>
        </g>
        <text x="2438" y="429" fill="#4a515a" fontSize="19" fontWeight="700" textAnchor="middle" fontFamily="Open Sans, sans-serif">TOP</text>
        <rect x="2404" y="552" width="69" height="25" rx="5" fill="#a4a7b4" stroke="#8e909c" strokeWidth="2" />
        <text x="2410" y="570" fill="#595c66" fontSize="15">WCS</text>
        <path d="M2454 562h12l-6 5z" fill="#b4b7c3" />
      </svg>
    </div>
  );
}

function NavBar() {
  const s = "#454b53";
  const b = "flex items-center justify-center";
  return (
    <nav aria-label="Navigation" className="absolute top-[346px] right-0.5 flex h-[311px] w-[46px] flex-col items-center rounded-sm border border-[#73777b] bg-[#5f6368]">
      <button type="button" aria-label="Close navigation bar" className="mt-0.5 mr-1 self-end"><Svg w={12} h={12}><circle cx="6" cy="6" r="5" stroke={s} /><path d="M4 4l4 4M8 4L4 8" stroke={s} /></Svg></button>
      <button type="button" aria-label="Steering wheel" className={`mt-2 ${b}`}><Svg w={36} h={36}><g stroke={s}><path d="M18 3h15v15a15 15 0 1 1-15-15z" /><circle cx="18" cy="18" r="9" /><circle cx="18" cy="18" r="6" /><path d="M11 24l-4 5M25 24l4 5" /></g></Svg></button>
      <svg width="8" height="5" className="mt-2.5" fill={s} aria-hidden="true"><path d="M0 0h8L4 5z" /></svg>
      <button type="button" aria-label="Pan" className={`mt-3.5 ${b}`}><Svg w={36} h={38}><path d="M14 36C8 30 6 25 2 19c3-2 5 0 9 4L9 8c2-3 4-1 5 2l2 8V4c1-3 4-3 5 0l1 14 3-12c2-3 5-2 4 2l-2 12 4-6c3-2 4 0 2 5-2 6-4 13-8 17z" stroke={s} strokeWidth="2" /></Svg></button>
      <button type="button" aria-label="Zoom extents" className={`mt-1 ${b}`}><Svg w={38} h={38}><g stroke={s} strokeWidth="2"><path d="M3 4l18 17M23 4L3 22" /><path d="M1 8V2h6M19 2h6v6M1 19v5h6" /><circle cx="26" cy="24" r="7" /><path d="M31 29l6 6" strokeWidth="4" /></g></Svg></button>
      <svg width="8" height="5" className="mt-2" fill={s} aria-hidden="true"><path d="M0 0h8L4 5z" /></svg>
      <button type="button" aria-label="Orbit" className={`mt-2 ${b}`}><Svg w={36} h={36}><g stroke={s} strokeWidth="2"><path d="M15 34V10h-4l6-8 6 8h-4v24z" /><path d="M12 14c-14 3-14 8 0 10M23 14c14 2 14 9-1 11" /><path d="M10 19v10l-6-5z" fill={s} /></g></Svg></button>
      <svg width="8" height="5" className="mt-2" fill={s} aria-hidden="true"><path d="M0 0h8L4 5z" /></svg>
      <button type="button" aria-label="Show motion" className={`mt-2.5 ${b}`}><Svg w={36} h={36}><g stroke={s} strokeWidth="2"><path d="M1 2h9v8H1zM14 2h9v8h-9zM26 2h9v8h-9zM1 14h25v20H1z" /><path d="M9 19v10l9-5z" fill={s} /></g></Svg></button>
      <button type="button" aria-label="Navigation options" className="mt-auto mr-1 mb-1 self-end"><Svg w={12} h={12}><circle cx="6" cy="6" r="5" stroke={s} /><path d="M3 5h6M4 8h4" stroke={s} /></Svg></button>
    </nav>
  );
}

function CommandWindow() {
  return (
    <section aria-label="Command line" className="absolute right-[542px] bottom-0 left-[544px] flex h-47 font-['Liberation_Mono',monospace] text-[18px]">
      <div className="flex w-[37px] shrink-0 flex-col items-center rounded-l bg-[#2b303d] pt-2">
        <Svg w={26} h={2}><path d="M0 1h26" strokeWidth="2" strokeDasharray="2 3" /></Svg>
        <button type="button" aria-label="Close command line" className="mt-4.5"><Svg w={14} h={14}><path d="M1 1l12 12M13 1L1 13" strokeWidth="3" stroke="#b8babd" /></Svg></button>
        <button type="button" aria-label="Customize command line" className="mt-4"><Svg><path d="M2 22L13 11" strokeWidth="4" stroke="#b8babd" strokeLinecap="round" /><path d="M17 1c-4 0-7 4-5 8 2 5 9 4 11-2V5l-4 3-3-2z" fill="#b8babd" stroke="none" /></Svg></button>
      </div>
      <div className="mt-px mb-0.5 flex min-w-0 flex-1 flex-col rounded-r-sm border-t border-[#7b7d82] bg-[#959697] text-black">
        <div className="flex flex-1 flex-col justify-end pb-1 pl-1">
          {[0, 1, 2, 3, 4, 5].map((n) => <p key={n} className="whitespace-pre leading-[23px]">{"Command:  Regenerating model."}</p>)}
        </div>
        <div className="flex h-[31px] items-center border-t border-[#2b303d] bg-[#bbbdbf] px-1.5">
          <button type="button" aria-label="Recent commands" className="flex items-center gap-1">
            <Svg w={25} h={18}><path d="M1 1h23v16H1z" stroke="#555" /><path d="M0 0h25v5H0z" fill="#555" stroke="none" /><path d="M3 8l3 2-3 2M7 13h6" stroke="#555" strokeWidth="1" /></Svg>
            <svg width="11" height="6" viewBox="0 0 11 6" fill="#4a4c50" aria-hidden="true"><path d="M0 0h11L5.500 6z" /></svg>
          </button>
          <input type="text" aria-label="Command" placeholder="Type a command" className="ml-2.5 min-w-0 flex-1 bg-transparent italic placeholder:text-[#66686b]" />
          <button type="button" aria-label="Expand history"><svg width="11" height="6" viewBox="0 0 11 6" fill="#4a4c50" aria-hidden="true"><path d="M0 6h11L5.500 0z" /></svg></button>
        </div>
      </div>
    </section>
  );
}

function Workspace() {
  return (
    <main className="flex min-h-[700px] flex-1 bg-[#222933]">
      <aside className="flex w-9 shrink-0 flex-col border-t-3 border-b-3 border-[#3b4453] pr-1 pb-1">
        <button type="button" className="flex flex-1 items-center justify-center bg-[#3b4453] text-[17px] text-[#f0f0f0]"><span className="rotate-180 [writing-mode:vertical-rl]">Layer Properties Manager</span></button>
      </aside>
      <div className="relative flex-1 overflow-hidden bg-[#212830]">
        <Drawing />
        <p className="relative flex px-1 pt-1.5 text-[17px] text-[#e8e8e8]">[−][Top][2D Wireframe]</p>
        <div className="absolute top-3 right-3 flex items-center gap-3.5">
          <button type="button" aria-label="Minimize viewport"><Svg w={16} h={16}><path d="M0 13h16" stroke="#fff" strokeWidth="4" /></Svg></button>
          <button type="button" aria-label="Restore viewport"><Svg w={16} h={16}><path d="M1.500 5.500h10v9h-10z" stroke="#fff" strokeWidth="3" /><path d="M4 1h11v10" stroke="#fff" strokeWidth="1.500" /></Svg></button>
          <button type="button" aria-label="Close viewport"><Svg w={15} h={14}><path d="M1 1l13 12M14 1L1 13" stroke="#fff" strokeWidth="3.500" /></Svg></button>
        </div>
        <ViewCube />
        <NavBar />
        <svg width="130" height="130" viewBox="56 1290 130 130" fill="none" stroke="#fff" strokeWidth="1.200" className="absolute bottom-5 left-5" role="img" aria-label="UCS icon">
          <path d="M65.500 1335v75.500H141M59.500 1403.500h13v13h-13z" />
          <g fill="#fff" stroke="none" fontFamily="Open Sans, sans-serif" fontWeight="300" fontSize="27" textAnchor="middle"><text x="76.500" y="1331">Y</text><text x="154.500" y="1409">X</text></g>
        </svg>
        <CommandWindow />
      </div>
    </main>
  );
}

function LayoutTabs() {
  return (
    <div className="flex h-[52px] shrink-0 items-start border-t-6 border-[#3b4453] bg-[#222933] text-[16px] text-[#f0f0f0]">
      <div className="flex h-9 items-center">
        <button type="button" className="ml-[11px] h-full w-[105px] bg-[#3b4453] text-[17px] font-bold text-white [clip-path:polygon(15px_0,100%_0,90px_100%,0_100%)]">Model</button>
        <button type="button" className="ml-2.5">a3</button>
        <span className="ml-3.5"><Slash /></span>
        <button type="button" aria-label="New layout" className="ml-4"><Plus /></button>
        <span className="ml-4"><Slash /></span>
      </div>
    </div>
  );
}

/* ---- status bar ---- */
function St({ label, on, w = "w-9", children }: Kids & { label: string; on?: boolean; w?: string }) {
  return <button type="button" aria-label={label} aria-pressed={on} className={`flex h-9 items-center justify-center ${w} ${on ? "border border-[#3b4453] bg-[#5f8fc3]" : ""}`}>{children}</button>;
}
const Grp = ({ children, className = "" }: Kids & { className?: string }) => <div className={`flex h-9 items-center bg-[#3b4453] ${className}`}>{children}</div>;
const person = "M12 0l4 10-1 4 8 9-6-2-5-3-5 3-6 2 8-9-1-4z";

function StatusBar() {
  return (
    <footer className="shrink-0 bg-[#222933]">
      <div className="flex h-9 pl-px text-[17px] text-white">
        <div className="mb-px flex-1 bg-[#3b4453]" />
        <Grp className="ml-1.5 w-18"><button type="button" className="h-9 w-full">MODEL</button></Grp>
        <Grp className="ml-1.5">
          <St label="Grid"><Svg><path d="M7 0v24M12 0v24M17 0v24M0 6h24M0 12h24M0 18h24" /></Svg></St>
          <St label="Snap"><Svg w={18} h={18}>{[1.5, 9, 16.5].map((y) => <path key={y} d={`M0 ${y}h18`} strokeWidth="3" strokeDasharray="3 4.500" />)}</Svg></St>
          <St label="Snap options" w="w-6"><Tri big /></St>
        </Grp>
        <Grp className="ml-1.5"><St label="Dynamic input"><Svg><path d="M6 0v11M0 5.500h11M10 14h13v5H10z" /><path d="M13 14h10v5H13z" fill={L} stroke="none" /></Svg></St></Grp>
        <Grp className="ml-0.5">
          <St label="Ortho"><Svg><path d="M1 0v23h23M1 17h6v6" /></Svg></St>
          <St label="Polar" on><Svg><circle cx="10" cy="13" r="9.500" stroke="#fff" /><path d="M24 13H11L20 3" stroke="#fff" /></Svg></St>
          <St label="Polar options" w="w-6"><Tri big /></St>
          <St label="Isodraft"><Svg><path d="M12 0v22" stroke={G} /><path d="M3 3l18 17" stroke="#e06060" strokeWidth="1" /><path d="M10 10h3v3h-3z" stroke="#fff" strokeWidth="1" /></Svg></St>
          <St label="Isodraft options" w="w-6"><Tri big /></St>
        </Grp>
        <Grp className="ml-0.5">
          <St label="Object snap tracking" on><Svg><path d="M19 4L1 21h23" stroke="#fff" /><path d="M8 11h4v4H8z" fill="#fff" /></Svg></St>
          <St label="Object snap" on><Svg><path d="M9 3h14v20H3V9M1 1h6v6H1z" stroke="#fff" /></Svg></St>
          <St label="Object snap options" w="w-6"><Tri big /></St>
        </Grp>
        <Grp className="ml-0.5"><St label="Selection cycling" on><Svg><path d="M4 0v7M0 3.500h8M4 20V8h16" stroke="#fff" /><path d="M7 10h15v14H7z" fill="#fff" stroke="none" /></Svg></St></Grp>
        <Grp className="ml-1.5">
          <St label="Annotation visibility" on><Svg><path d={person} fill="#fff" stroke="none" transform="translate(-1 0)" /><circle cx="20" cy="5" r="4" stroke="#fff" /></Svg></St>
          <St label="Auto scale"><Svg><path d={person} fill={L} stroke="none" transform="translate(-1 0)" /><path d="M21 0l-5 7h3l-1 5 5-7h-3z" fill={L} stroke="none" /></Svg></St>
          <St label="Annotation objects"><Svg><path d={person} fill={L} stroke="none" /></Svg></St>
          <button type="button" className="flex h-9 w-[50px] items-center gap-1.5 pl-1 text-[16px]">1:1<Tri big /></button>
        </Grp>
        <Grp className="ml-1.5">
          <St label="Workspace"><Svg><circle cx="12" cy="12" r="6.500" strokeWidth="5" /><circle cx="12" cy="12" r="10.500" strokeWidth="3.500" strokeDasharray="4.200 4.040" /></Svg></St>
          <St label="Workspace options" w="w-6"><Tri big /></St>
        </Grp>
        <Grp className="ml-0.5"><St label="Annotation monitor"><Svg><path d="M12 0v24M0 12h24" strokeWidth="2.500" /></Svg></St></Grp>
        <Grp className="ml-1.5"><St label="Isolate objects"><Svg><path d="M1 1h9v9H1zM10 15l5 9H5z" /><circle cx="18" cy="11" r="5.500" /></Svg></St></Grp>
        <Grp className="ml-1 w-21 pl-1">
          <button type="button" aria-label="Sync status"><Svg w={36} h={36}><path d="M0 0h21l9 9v16H0z" fill="#2f62a8" stroke="none" /><path d="M21 0l9 9h-9z" fill="#7ba3d0" stroke="none" /><path d="M8 0v20M0 8h22" stroke="#cfe0f4" strokeWidth="2" /><circle cx="8" cy="8" r="3" fill="#2f62a8" stroke="#fff" strokeWidth="2" /><path d="M0 22c6-4 12-3 16 8H0z" fill="#f7b722" stroke="none" /><path d="M14 26l8 8 13-14" stroke="#46b45a" strokeWidth="5" /></Svg></button>
          <button type="button" aria-label="Drawing history" className="ml-2.5"><Svg><path d="M4 7A11 11 0 0 1 13 1A10.500 10.500 0 0 1 23 14M13 5v7h5" /><path d="M3 4v5h6z" fill={L} stroke="none" /><path d="M1 11h10v12H1z" fill="#2f62a8" stroke="#fff" /><path d="M1 14h10M4 11v8" stroke="#fff" strokeWidth="1" /><path d="M2 20c4-2 6-1 8 2H2z" fill="#f7b722" stroke="none" /><circle cx="18.500" cy="18" r="5.500" fill="#5fb0f0" stroke="none" /><path d="M18.500 17v4M18.500 14v1.500" stroke="#fff" /></Svg></button>
        </Grp>
        <Grp className="ml-1 w-18">
          <St label="Clean screen"><Svg w={26} h={18}><path d="M1 1h24v16H1z" /><path d="M17 3h6v6zM3 9v6h6z" fill={L} stroke="none" /><path d="M16 9l5-5M9 10l-5 5" /></Svg></St>
          <St label="Customization"><Svg><path d="M0 2h24M0 12h24M0 22h24" strokeWidth="2.500" /></Svg></St>
        </Grp>
      </div>
      <div className="h-0.5 bg-[#43474e]" />
      <div className="flex h-[9px] items-end justify-center bg-linear-to-r from-[#1d222c] via-[#12235c] via-50% to-[#1e2330] to-66%">
        <span className="mr-[600px] h-1 w-[58px] rounded-t border-t border-[#3a466e] bg-[#24325f]" />
      </div>
    </footer>
  );
}

function Balloon() {
  return (
    <div role="status" className="fixed right-0 bottom-[65px] z-10 h-[152px] w-[448px] rounded-[24px] border-2 border-black bg-[#ffffe1] text-[17px] text-black">
      <svg width="32" height="32" viewBox="0 0 32 32" className="absolute top-[148px] left-[313px]" aria-hidden="true"><path d="M2 0h29v31z" fill="#ffffe1" /><path d="M2 1l28 28V0" fill="none" stroke="#000" strokeWidth="1.500" /></svg>
      <div className="flex items-center pt-3 pl-3">
        <svg width="24" height="24" viewBox="0 0 24 24" aria-hidden="true"><circle cx="12" cy="12" r="11" fill="#1f4fc8" stroke="#8a94ac" strokeWidth="2" /><path d="M12 10v8" stroke="#fff" strokeWidth="3" /><circle cx="12" cy="6.500" r="1.800" fill="#fff" /></svg>
        <h2 className="ml-4 font-bold">View Drawing History</h2>
        <button type="button" aria-label="Close notification" className="mr-2 ml-auto flex size-6 items-center justify-center border border-[#999] bg-[#f0f0f0]"><svg width="14" height="14" viewBox="0 0 14 14" stroke="#000" strokeWidth="2" aria-hidden="true"><path d="M1 1l12 12M13 1L1 13" /></svg></button>
      </div>
      <p className="mt-2.5 pl-[18px] leading-[25px]">You can view and compare previous versions in the<br />Drawing History palette by signing into OneDrive.</p>
      <a href="#onedrive" className="mt-2.5 ml-[18px] inline-block leading-6 text-[#0000ee] underline">Sign in to OneDrive</a>
    </div>
  );
}

export default function App() {
  return (
    <div className="flex min-h-screen flex-col overflow-hidden bg-[#222933] font-['Open_Sans',sans-serif]">
      <TitleBar />
      <RibbonTabs />
      <Ribbon />
      <FileTabs />
      <Workspace />
      <LayoutTabs />
      <StatusBar />
      <Balloon />
    </div>
  );
}
